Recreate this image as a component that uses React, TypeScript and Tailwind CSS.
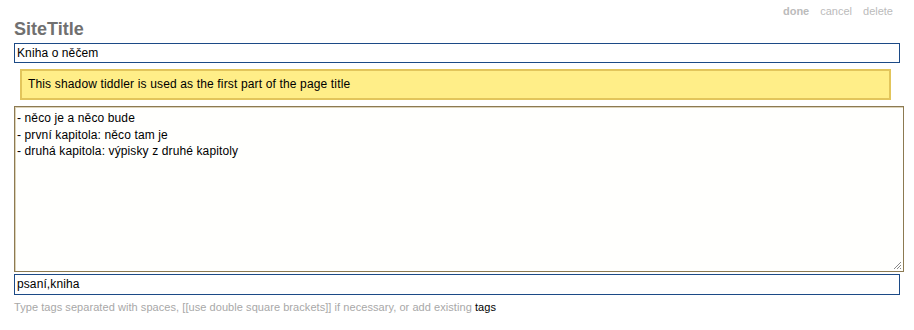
import React from "react";

export default function App() {
  return (
    <div className="w-[914px] h-[330px] bg-white relative overflow-hidden" style={{ fontFamily: '"Liberation Sans", Arial, sans-serif' }}>
      <div className="absolute right-[21px] top-[5px] flex gap-[11px] text-[11px] leading-[13px] text-[#bbbbbb]">
        <span className="font-bold">done</span>
        <span>cancel</span>
        <span>delete</span>
      </div>
      <div className="pl-[14px] pr-[14px] pt-[18px]">
        <div className="text-[18px] leading-[22px] font-bold text-[#707070]">SiteTitle</div>
        <div className="mt-[3px] w-[886px] h-[20px] border border-[#1c4a86] px-[2px] text-[12px] leading-[18px] tracking-[0.1px] text-black">Kniha o něčem</div>
        <div className="mt-[6px] ml-[6px] w-[871px] h-[31px] border-2 border-[#e2c55b] bg-[#ffee88] px-[6px] text-[12px] leading-[27px] tracking-[0.15px] text-black">
          This shadow tiddler is used as the first part of the page title
        </div>
        <div className="relative mt-[6px] w-[890px] h-[166px] border border-[#8c7a52] bg-[#fffffd] px-[2px] pt-[3px] text-[12px] leading-[16.5px] tracking-[0.12px] text-black" style={{ boxShadow: "inset 1px 1px 0 #ddd3b8" }}>
          <div>- něco je a něco bude</div>
          <div>- první kapitola: něco tam je</div>
          <div>- druhá kapitola: výpisky z druhé kapitoly</div>
          <svg className="absolute right-[1px] bottom-[1px]" width="10" height="10" viewBox="0 0 10 10">
            <line x1="9" y1="2" x2="2" y2="9" stroke="#888" strokeWidth="1" />
            <line x1="9" y1="5" x2="5" y2="9" stroke="#888" strokeWidth="1" />
            <line x1="9" y1="8" x2="8" y2="9" stroke="#888" strokeWidth="1" />
          </svg>
        </div>
        <div className="mt-[2px] w-[886px] h-[21px] border border-[#1c4a86] px-[2px] text-[12px] leading-[19px] tracking-[0.1px] text-black">psaní,kniha</div>
        <div className="mt-[5px] text-[11px] leading-[14px] tracking-[0.06px] text-[#a8a8a8]">
          Type tags separated with spaces, [[use double square brackets]] if necessary, or add existing <span className="text-black">tags</span>
        </div>
      </div>
    </div>
  );
}
